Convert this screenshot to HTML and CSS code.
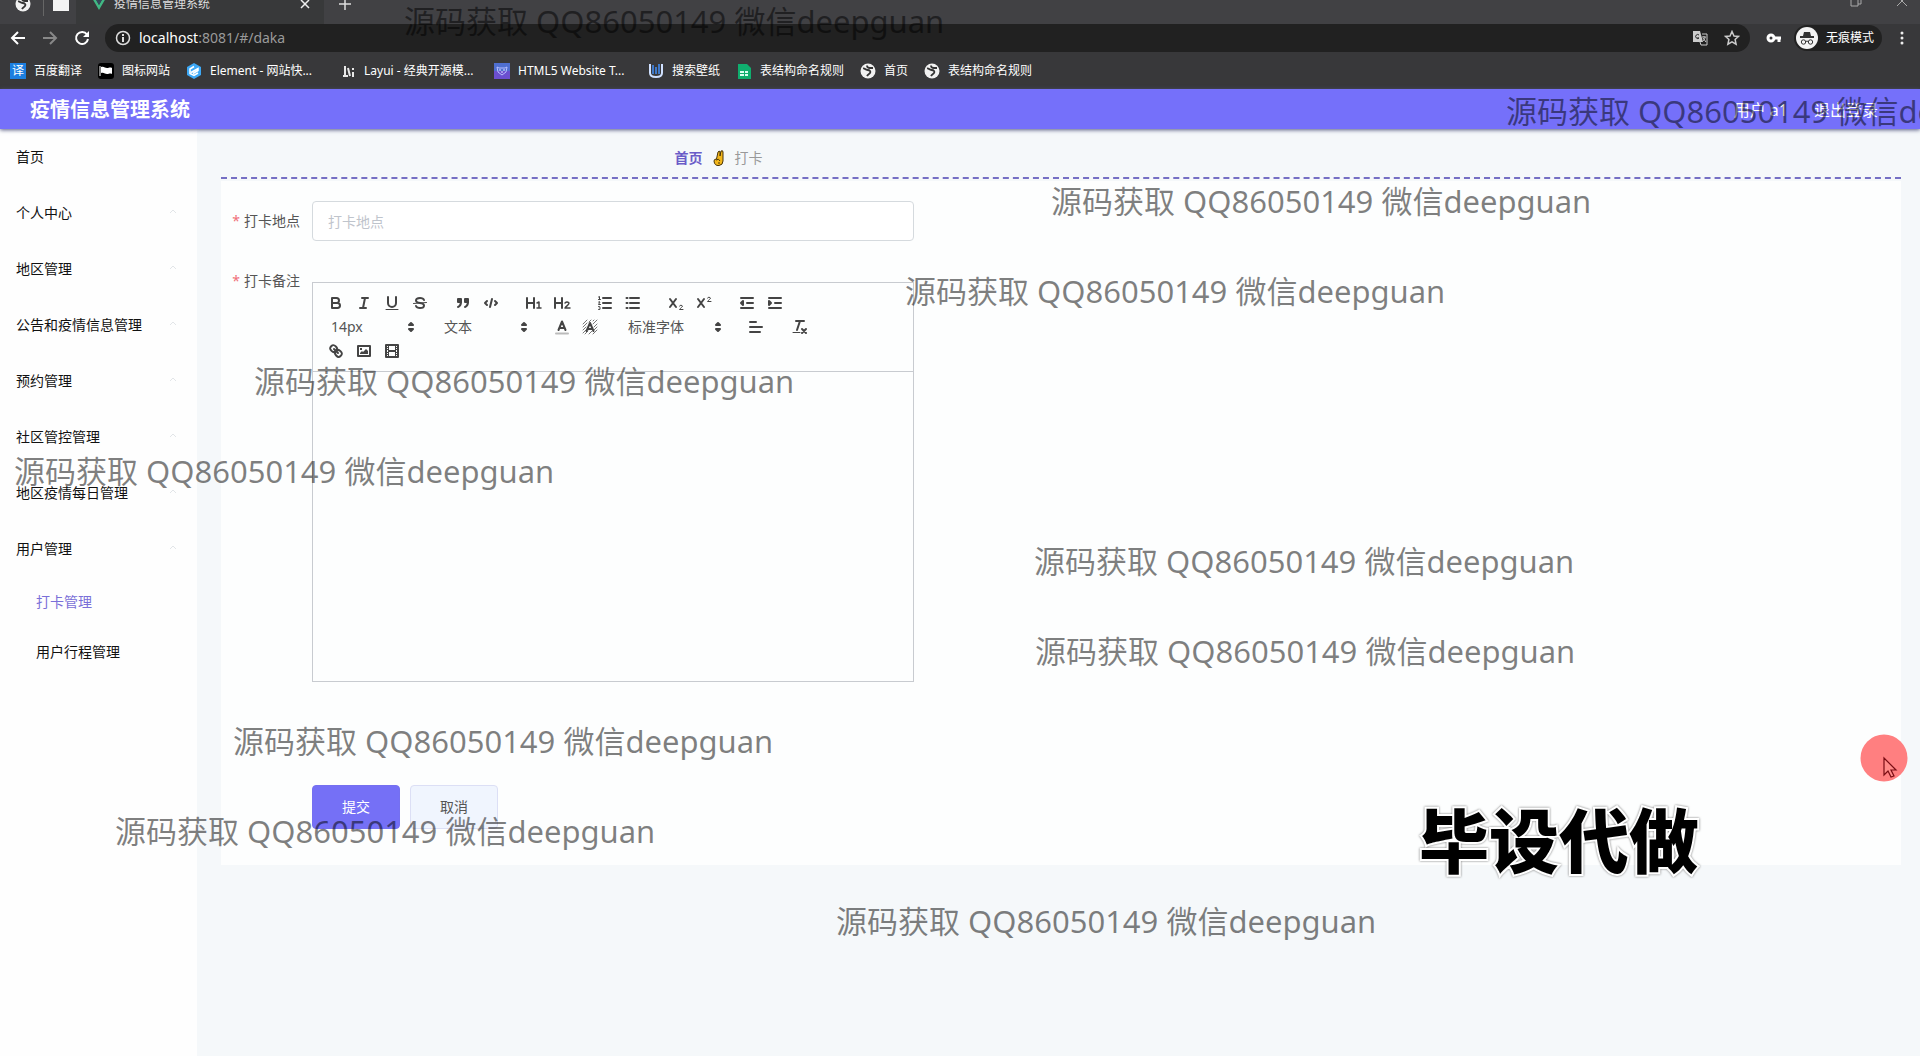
FILE: index.html
```html
<!DOCTYPE html>
<html lang="zh-CN">
<head>
<meta charset="utf-8">
<meta name="viewport" content="width=device-width, initial-scale=1">
<title>疫情信息管理系统</title>
<link rel="stylesheet" href="styles.css">
</head>
<body>
<svg class="defs" aria-hidden="true">
  <symbol id="globe" viewBox="0 0 16 16"><circle cx="8" cy="8" r="7.500" fill="#f1f1f1"/><path d="M3 5.500c2-.5 2 1.500 4.500 1.500s3.500 1.500 2.500 3-2 1-3 3M7 2.500c0 2 1 2.500 3 2.500h3" fill="none" stroke="#333" stroke-width="1.800"/></symbol>
  <symbol id="caret" viewBox="0 0 8 5"><path d="M1 4l3-3 3 3" fill="none" stroke="#e2e5e8"/></symbol>
  <symbol id="sort" viewBox="0 0 18 18"><path d="M7 11l2 2 2-2zM7 7l2-2 2 2z" fill="#444" stroke="#444" stroke-width="2" stroke-linejoin="round"/></symbol>
</svg>

<div class="browser">
  <div class="tabs">
    <svg class="tab-globe" width="16" height="16"><use href="#globe"/></svg>
    <span class="tab-sep"></span>
    <svg class="tab-folder" width="18" height="16" viewBox="0 0 18 16"><path d="M1 1h7l2 2h7v12H1z" fill="#f4f4f4"/></svg>
    <div class="tab">
      <svg width="14" height="14" viewBox="0 0 14 14"><path d="M0 1h3l4 7 4-7h3L7 13z" fill="#41b883"/><path d="M3 1h2.500L7 4l1.500-3H11L7 8z" fill="#35495e"/></svg>
      <span class="tab-title">疫情信息管理系统</span>
      <button class="bare" aria-label="关闭标签页"><svg width="10" height="10" viewBox="0 0 10 10"><path d="M1 1l8 8M9 1L1 9" stroke="#eee" stroke-width="1.500"/></svg></button>
    </div>
    <button class="bare tab-new" aria-label="新标签页"><svg width="14" height="14" viewBox="0 0 14 14"><path d="M7 1v12M1 7h12" stroke="#ddd" stroke-width="1.500"/></svg></button>
    <div class="win">
      <button class="bare" aria-label="最小化"><svg width="12" height="12" viewBox="0 0 12 12"><path d="M1 3h10" stroke="#aaa"/></svg></button>
      <button class="bare" aria-label="还原"><svg width="12" height="12" viewBox="0 0 12 12"><path d="M1 3h7v8H1zM3 3V1h8v8H8" fill="none" stroke="#aaa"/></svg></button>
      <button class="bare" aria-label="关闭"><svg width="12" height="12" viewBox="0 0 12 12"><path d="M1 1l10 10M11 1L1 11" stroke="#aaa"/></svg></button>
    </div>
  </div>
  <div class="toolbar">
    <button class="bare nav-btn" aria-label="后退"><svg width="16" height="16" viewBox="0 0 16 16"><path d="M15 8H2M8 2L2 8l6 6" fill="none" stroke="#fff" stroke-width="2"/></svg></button>
    <button class="bare nav-btn" aria-label="前进"><svg width="16" height="16" viewBox="0 0 16 16"><path d="M1 8h13M8 2l6 6-6 6" fill="none" stroke="#888" stroke-width="2"/></svg></button>
    <button class="bare nav-btn" aria-label="刷新"><svg width="16" height="16" viewBox="0 0 16 16"><path d="M13 4.500A6 6 0 1 0 14 9" fill="none" stroke="#fff" stroke-width="2"/><path d="M15 1v6H9z" fill="#fff"/></svg></button>
    <div class="omnibox">
      <svg width="16" height="16" viewBox="0 0 16 16"><circle cx="8" cy="8" r="6.500" fill="none" stroke="#ddd" stroke-width="1.500"/><path d="M8 7v5M8 4v2" stroke="#ddd" stroke-width="2"/></svg>
      <div class="url"><span class="host">localhost</span>:8081/#/daka</div>
      <button class="bare" aria-label="翻译"><svg width="16" height="16" viewBox="0 0 16 16"><path d="M1 1h7l3 11H1z" fill="#ccc"/><path d="M10 4h5v11H9l-1-3" fill="none" stroke="#ccc"/><path d="M7 5a2 2 0 1 0 0 3H5" fill="none" stroke="#222"/><path d="M10 7h4M12 6v1M13 7c0 2-1 3-2 4M11 8l3 4" fill="none" stroke="#ccc"/></svg></button>
      <button class="bare" aria-label="收藏"><svg width="16" height="16" viewBox="0 0 16 16"><path d="M8 1.500l2 4.500 4.500.4-3.400 3.100 1 4.700L8 11.800l-4.100 2.400 1-4.700L1.500 6.400 6 6z" fill="none" stroke="#ccc" stroke-width="1.500"/></svg></button>
    </div>
    <button class="bare" aria-label="密码"><svg width="16" height="16" viewBox="0 0 16 16"><circle cx="5" cy="8" r="3" fill="none" stroke="#fff" stroke-width="3"/><path d="M8 8h7M13 8v4" stroke="#fff" stroke-width="3"/></svg></button>
    <button class="bare incognito"><svg width="22" height="22" viewBox="0 0 22 22"><circle cx="11" cy="11" r="11" fill="#f3f3f3"/><path d="M7 9l1-4h6l1 4zM4 9h14v2H4z" fill="#333"/><path d="M10 14.500q1-1 2 0" fill="none" stroke="#333"/><circle cx="7.500" cy="15" r="2.200" fill="none" stroke="#333"/><circle cx="14.500" cy="15" r="2.200" fill="none" stroke="#333"/></svg>无痕模式</button>
    <button class="bare" aria-label="更多"><svg width="16" height="16" viewBox="0 0 16 16"><circle cx="8" cy="3" r="1.500" fill="#eee"/><circle cx="8" cy="8" r="1.500" fill="#eee"/><circle cx="8" cy="13" r="1.500" fill="#eee"/></svg></button>
  </div>
  <nav class="bookmarks" aria-label="书签">
    <a href="#"><span class="yi">译</span>百度翻译</a>
    <a href="#"><svg width="16" height="16" viewBox="0 0 16 16"><rect width="16" height="16" rx="3" fill="#000"/><path d="M2 3v10" stroke="#fff"/><path d="M3 4c3-1 4 1 6 1s3-1 5 0v6c-2-1-3 0-5 0s-3-2-6-1z" fill="#fff"/></svg>图标网站</a>
    <a class="long" href="#"><svg width="16" height="16" viewBox="0 0 16 16"><path d="M8 0l7 4v8l-7 4-7-4V4z" fill="#3da8f5"/><path d="M8 3.500L4 6v4.500l4 2 4-2.500M5 9.500l7-4v2l-5 3" fill="none" stroke="#fff" stroke-width="1.500"/></svg>Element - 网站快...</a>
    <a class="long" href="#"><svg width="16" height="16" viewBox="0 0 16 16"><path d="M5 3v9M3 13h5M8 5l2 8M13 9v5M13 5v2" fill="none" stroke="#e8e8e8" stroke-width="2"/></svg>Layui - 经典开源模...</a>
    <a class="long" href="#"><svg width="16" height="16" viewBox="0 0 16 16"><path d="M0 0h16v8H0z" fill="#4f6fd0"/><path d="M0 8h16v8H0z" fill="#6b4fd0"/><path d="M3 4l2 1h6l2-1-1 5-4 3-4-3z" fill="none" stroke="#b9c0ff"/><path d="M5 7h2M9 7h2M7 9h2" stroke="#dfe2ff"/></svg>HTML5 Website T...</a>
    <a href="#"><svg width="16" height="16" viewBox="0 0 16 16"><path d="M2 1v9q0 4 6 4t6-4V1" fill="none" stroke="#cfe0ff" stroke-width="2"/><path d="M5 2v9M8 4v7M11 1v10" stroke="#3f78c8" stroke-width="2"/></svg>搜索壁纸</a>
    <a href="#"><svg width="16" height="16" viewBox="0 0 16 16"><path d="M2 1h9l4 4v11H2z" fill="#0fae6e"/><path d="M4 8h4v2H4zM9 8h3v2H9zM4 11h4v2H4zM9 11h3v2H9z" fill="#d9fff0"/></svg>表结构命名规则</a>
    <a href="#"><svg width="16" height="16"><use href="#globe"/></svg>首页</a>
    <a href="#"><svg width="16" height="16"><use href="#globe"/></svg>表结构命名规则</a>
  </nav>
</div>

<header class="header">
  <h1>疫情信息管理系统</h1>
  <div class="account"><span>用户 a1</span><a href="#">退出登录</a></div>
</header>

<div class="layout">
  <nav class="side" aria-label="菜单">
    <a href="#">首页</a>
    <button>个人中心<svg width="8" height="5"><use href="#caret"/></svg></button>
    <button>地区管理<svg width="8" height="5"><use href="#caret"/></svg></button>
    <button>公告和疫情信息管理<svg width="8" height="5"><use href="#caret"/></svg></button>
    <button>预约管理<svg width="8" height="5"><use href="#caret"/></svg></button>
    <button>社区管控管理<svg width="8" height="5"><use href="#caret"/></svg></button>
    <button>地区疫情每日管理<svg width="8" height="5"><use href="#caret"/></svg></button>
    <button>用户管理<svg width="8" height="5"><use href="#caret"/></svg></button>
    <a class="sub active" href="#/daka">打卡管理</a>
    <a class="sub" href="#">用户行程管理</a>
  </nav>

  <main class="main">
    <nav class="crumbs" aria-label="面包屑">
      <a href="#">首页</a>
      <svg width="12" height="18" viewBox="0 0 12 18"><path d="M3.500 10L5 3q1.500-2 2 0v4l1-5q2-1 2 1v9q0 4-4 4.500Q1.500 17 1 12q0-2 2.500-2z" fill="#f3b71b" stroke="#4a3508"/><path d="M3 11q3-2 4 1M5 14h2" fill="none" stroke="#4a3508"/></svg>
      <span>打卡</span>
    </nav>
    <form class="panel">
      <div class="row">
        <label for="place"><span class="req">*</span>打卡地点</label>
        <input id="place" class="text" type="text" placeholder="打卡地点">
      </div>
      <div class="row">
        <label for="note"><span class="req">*</span>打卡备注</label>
        <div class="editor">
          <div class="tools">
            <div class="group">
              <button type="button" aria-label="加粗"><svg viewBox="0 0 18 18"><path d="M5 4h4.500a2.500 2.500 0 0 1 0 5H5zM5 9h5.500a2.500 2.500 0 0 1 0 5H5z"/></svg></button>
              <button type="button" aria-label="斜体"><svg viewBox="0 0 18 18"><path d="M7 4h6M5 14h6M8 14l2-10"/></svg></button>
              <button type="button" aria-label="下划线"><svg viewBox="0 0 18 18"><path d="M5 3v6a4 4 0 0 0 8 0V3"/><path class="thin" d="M3 15.500h12"/></svg></button>
              <button type="button" aria-label="删除线"><svg viewBox="0 0 18 18"><path class="thin" d="M15.500 8.500l-13 1"/><path d="M13 6c-.5-1.300-2-2-4-2-2.300 0-4 1-4 2.500S6.200 8.700 9 9s4 1 4 2.500S11.300 14 9 14c-2 0-3.500-.7-4-2"/></svg></button>
            </div>
            <div class="group">
              <button type="button" aria-label="引用"><svg viewBox="0 0 18 18"><path class="fill" d="M4 5h3v3H4zM11 5h3v3h-3z"/><path class="fill" d="M7 8c0 4-3 5-3 5M14 8c0 4-3 5-3 5"/></svg></button>
              <button type="button" aria-label="代码"><svg viewBox="0 0 18 18"><path d="M5 7L3 9l2 2M13 7l2 2-2 2M10 5L8 13"/></svg></button>
            </div>
            <div class="group">
              <button type="button" aria-label="标题1"><svg viewBox="0 0 18 18"><path d="M2 4v10M9 4v10M2 9h7"/><path class="even" d="M12 9l2-1v6M12 14h4"/></svg></button>
              <button type="button" aria-label="标题2"><svg viewBox="0 0 18 18"><path d="M2 4v10M9 4v10M2 9h7"/><path class="even" d="M12 9q2-2 4 0c0 2-3 3-4 5h5"/></svg></button>
            </div>
            <div class="group">
              <button type="button" aria-label="有序列表"><svg viewBox="0 0 18 18"><path d="M7 4h8M7 9h8M7 14h8"/><path class="thin" d="M2.500 5.500h2M3.500 5.500v-3l-1 .5M2.500 8q1-1 1.500 0l-1.500 2.500h2M2.500 12.500q2-.5 1.500 1.500 1 2-1.500 1.500"/></svg></button>
              <button type="button" aria-label="无序列表"><svg viewBox="0 0 18 18"><path d="M6 4h9M6 9h9M6 14h9M2.500 4h1M2.500 9h1M2.500 14h1"/></svg></button>
            </div>
            <div class="group">
              <button type="button" aria-label="下标"><svg viewBox="0 0 18 18"><path d="M3 5l6 8M9 5l-6 8"/><path class="thin" d="M12.500 12q1.500-2 3 0c0 1-2 2-3 3.500h3.500"/></svg></button>
              <button type="button" aria-label="上标"><svg viewBox="0 0 18 18"><path d="M3 5l6 8M9 5l-6 8"/><path class="thin" d="M12.500 4q1.500-2 3 0c0 1-2 2-3 3.500h3.500"/></svg></button>
            </div>
            <div class="group">
              <button type="button" aria-label="减少缩进"><svg viewBox="0 0 18 18"><path d="M3 4h12M9 9h6M3 14h12"/><path class="fill" d="M5 7v4L3 9z"/></svg></button>
              <button type="button" aria-label="增加缩进"><svg viewBox="0 0 18 18"><path d="M3 4h12M9 9h6M3 14h12"/><path class="fill" d="M3 7v4l2-2z"/></svg></button>
            </div>
            <div class="group picker">
              <select aria-label="字号"><option>14px</option></select><svg><use href="#sort"/></svg>
            </div>
            <div class="group picker">
              <select aria-label="段落"><option>文本</option></select><svg><use href="#sort"/></svg>
            </div>
            <div class="group">
              <button type="button" aria-label="文字颜色"><svg viewBox="0 0 18 18"><path d="M5.500 12L9 3.500l3.500 8.500M6.500 10h5"/><path d="M3 15.500h12" class="pale"/></svg></button>
              <button type="button" aria-label="背景颜色"><svg viewBox="0 0 18 18"><path class="hatch" d="M2 6l4-4M2 9l4-4M2 12l3-3M2 15l3-3M4 16l3-3M8 16l3-3M12 16l4-4M13 12l3-3M13 9l3-3M12 6l4-4M8 4l2-2M12 3l1-1"/><path d="M5.500 13L9 5l3.500 8M6.500 11h5"/></svg></button>
            </div>
            <div class="group picker wide">
              <select aria-label="字体"><option>标准字体</option></select><svg><use href="#sort"/></svg>
            </div>
            <div class="group">
              <button type="button" aria-label="对齐"><svg viewBox="0 0 18 18"><path d="M3 4h6M3 9h12M3 14h10"/></svg></button>
            </div>
            <div class="group">
              <button type="button" aria-label="清除格式"><svg viewBox="0 0 18 18"><path d="M6 3h8M10 3L7 12M12 11l4 4M16 11l-4 4"/><path class="thin" d="M3 14.500h7"/></svg></button>
            </div>
            <div class="group">
              <button type="button" aria-label="链接"><svg viewBox="0 0 18 18"><path d="M7 7l4 4"/><path d="M8.900 4.577a3.476 3.476 0 0 1 .36 4.679A3.476 3.476 0 0 1 4.577 8.900C3.185 7.500 2.035 6.400 4.217 4.217S7.500 3.185 8.900 4.577Z"/><path d="M13.423 9.100a3.476 3.476 0 0 0-4.679-.36 3.476 3.476 0 0 0 .36 4.679c1.392 1.392 2.500 2.542 4.679.36S14.815 10.500 13.423 9.100Z"/></svg></button>
              <button type="button" aria-label="图片"><svg viewBox="0 0 18 18"><path d="M3 4h12v10H3z"/><path class="solid" d="M5 12v-1l2-2 1 1 3-3 2 2v3zM5 6h2v2H5z"/></svg></button>
              <button type="button" aria-label="视频"><svg viewBox="0 0 18 18"><path d="M3 3h12v12H3z"/><path class="solid" d="M5 3h1v12H5zM12 3h1v12h-1zM5 8h8v2H5zM3 5h3v1H3zM3 7h3v1H3zM3 10h3v1H3zM3 12h3v1H3zM12 5h3v1h-3zM12 7h3v1h-3zM12 10h3v1h-3zM12 12h3v1h-3z"/></svg></button>
            </div>
          </div>
          <textarea id="note"></textarea>
        </div>
      </div>
      <div class="actions">
        <button class="btn primary" type="submit">提交</button>
        <button class="btn" type="button">取消</button>
      </div>
    </form>
  </main>
</div>

<div class="overlay" aria-hidden="true">
  <p class="mark m1">源码获取 QQ86050149 微信deepguan</p>
  <p class="mark m2">源码获取 QQ86050149 微信deepguan</p>
  <p class="mark m3">源码获取 QQ86050149 微信deepguan</p>
  <p class="mark m4">源码获取 QQ86050149 微信deepguan</p>
  <p class="mark m5">源码获取 QQ86050149 微信deepguan</p>
  <p class="mark m6">源码获取 QQ86050149 微信deepguan</p>
  <p class="mark m7">源码获取 QQ86050149 微信deepguan</p>
  <p class="mark m8">源码获取 QQ86050149 微信deepguan</p>
  <p class="mark m9">源码获取 QQ86050149 微信deepguan</p>
  <p class="mark m10">源码获取 QQ86050149 微信deepguan</p>
  <p class="mark m11">源码获取 QQ86050149 微信deepguan</p>
  <p class="stamp">毕设代做</p>
  <svg class="pointer" width="48" height="48" viewBox="0 0 48 48"><circle cx="24" cy="24" r="23.500" fill="#ff7f80"/><path d="M24 24v17l4-4 3 6 3-1-3-6h5z" fill="#ff8a88" stroke="#7a0d14" stroke-width="1.200"/></svg>
</div>
</body>
</html>
```
FILE: styles.css
```css
* { box-sizing: border-box; }

body {
  margin: 0;
  min-height: 100vh;
  display: flex;
  flex-direction: column;
  position: relative;
  overflow: hidden;
  background: #f5f8fa;
  color: #111;
  font: 14px/20px "Noto Sans", "Noto Sans CJK SC", sans-serif;
}

a { color: inherit; text-decoration: none; }
svg { flex: none; display: block; }
.defs { position: absolute; width: 0; height: 0; }
button, input, select, textarea { font: inherit; color: inherit; }
.bare { border: 0; padding: 0; background: none; }

/* Browser frame, scrolled slightly past its top edge */
.browser { margin-top: -16px; background: #38383a; color: #fff; font-size: 12px; }
.tabs { display: flex; align-items: center; height: 40px; padding: 0 12px 0 15px; background: #414144; }
.tab-sep { width: 1px; height: 24px; margin: 0 8px 0 12px; background: #666; }
.tab { display: flex; align-items: center; gap: 8px; width: 248px; height: 40px; margin-left: 6px; padding: 0 14px 0 16px; background: #38393a; }
.tab-title { flex: 1; color: #ddd; }
.tab-new { margin-left: 14px; }
.win { display: flex; gap: 34px; margin-left: auto; }
.win button { margin-top: -6px; }

.toolbar { display: flex; align-items: center; gap: 16px; height: 28px; padding: 0 10px; }
.omnibox { display: flex; align-items: center; gap: 16px; flex: 1; height: 28px; margin-left: -1px; padding: 0 10px; border-radius: 14px; background: #212121; }
.omnibox > svg { margin-right: -8px; }
.url { flex: 1; color: #9a9a9a; font-size: 14px; }
.host { color: #fff; }
.incognito { display: flex; align-items: center; gap: 8px; height: 26px; padding: 0 8px 0 2px; margin: 0 -4px; border-radius: 13px; background: #212121; }

.bookmarks { display: flex; align-items: center; gap: 16px; height: 37px; padding: 0 10px; }
.bookmarks a { display: flex; align-items: center; gap: 8px; white-space: nowrap; }
.bookmarks .long { width: 138px; }
.yi { width: 16px; background: #1c7fe0; text-align: center; line-height: 16px; }

.header { display: flex; align-items: center; justify-content: space-between; height: 40px; padding: 2px 42px 0 30px; background: #7570fa; color: #fff; box-shadow: 0 1px 4px #555a80; z-index: 1; }
.header h1 { margin: 0; font-size: 20px; line-height: 28px; font-weight: 700; }
.account { display: flex; gap: 26px; font-size: 16px; }

.layout { display: flex; flex: 1; }
.side { display: flex; flex-direction: column; width: 197px; background: #fefefe; }
.side > a, .side > button { display: flex; align-items: center; justify-content: space-between; flex: none; height: 56px; padding: 0 20px 0 16px; border: 0; background: none; text-align: left; }
.side button svg { margin-top: -4px; }
.side > .sub { height: 50px; padding-left: 36px; }
.side > .active { color: #7a6fd8; }

.main { flex: 1; padding: 10px 19px 0 24px; }
.crumbs { display: flex; align-items: center; gap: 10px; height: 40px; padding-left: 27%; border-bottom: 2px dashed #756fc4; color: #999; }
.crumbs a { color: #6a5cc8; font-weight: 700; }
.panel { margin-top: 2px; padding: 20px 0 36px; background: #fdfefe; }
.row { display: flex; align-items: flex-start; margin-bottom: 20px; }
.row label { width: 91px; padding-right: 12px; color: #555; line-height: 40px; text-align: right; }
.req { margin-right: 4px; color: #f07078; }
.text { width: 602px; height: 40px; padding: 0 15px; border: 1px solid #d5dade; border-radius: 4px; background: #fff; }
.text::placeholder { color: #bfc4cc; opacity: 1; }

.editor { width: 602px; margin: 21px 0 83px; border: 1px solid #c8cbd0; }
.tools { display: flex; flex-wrap: wrap; padding: 8px 8px 8px 9px; border-bottom: 1px solid #c8cbd0; }
.group { display: flex; margin-right: 15px; }
.group button { width: 28px; height: 24px; padding: 3px 5px; border: 0; background: none; }
.group svg { width: 18px; height: 18px; fill: none; stroke: #444; stroke-width: 2; stroke-linecap: round; stroke-linejoin: round; }
.group .thin { stroke-width: 1; }
.group .even { stroke-width: 1.500; }
.group .fill { fill: #444; }
.group .solid { fill: #444; stroke: none; }
.group .pale { stroke: #bbb; }
.group .hatch { stroke: #777; stroke-width: 1; }
.picker { position: relative; width: 98px; height: 24px; }
.picker.wide { width: 108px; }
.picker select { width: 100%; padding: 0 20px 0 9px; border: 0; appearance: none; background: none; color: #555; }
.picker svg { position: absolute; top: 3px; right: 0; pointer-events: none; }
.editor textarea { display: block; width: 100%; height: 309px; padding: 12px 15px; border: 0; resize: none; background: none; }

.actions { display: flex; gap: 10px; padding-left: 91px; }
.btn { width: 88px; height: 44px; border: 1px solid #dcdff5; border-radius: 4px; background: #f0f5fe; color: #555; }
.btn.primary { border-color: #7570f0; background: #7570f6; color: #fff; }

/* Floating marks over the page */
.overlay { position: absolute; inset: 0; z-index: 2; overflow: hidden; pointer-events: none; }
.overlay p { position: absolute; margin: 0; white-space: nowrap; }
.mark { color: rgba(0, 0, 0, .5); font-size: 31px; line-height: 40px; }
.m1 { left: 404px; top: 1px; }
.m2 { left: 1506px; top: 91px; }
.m3 { left: 1051px; top: 181px; }
.m4 { left: 905px; top: 271px; }
.m5 { left: 254px; top: 361px; }
.m6 { left: 14px; top: 451px; }
.m7 { left: 1034px; top: 541px; }
.m8 { left: 1035px; top: 631px; }
.m9 { left: 233px; top: 721px; }
.m10 { left: 115px; top: 811px; }
.m11 { left: 836px; top: 901px; }
.stamp { left: 1419px; top: 801px; color: #000; font-size: 70px; line-height: 80px; font-weight: 900; -webkit-text-stroke: 4px #fff; paint-order: stroke fill; filter: drop-shadow(0 0 1px #777); }
.pointer { position: absolute; left: 1860px; top: 734px; }
```
